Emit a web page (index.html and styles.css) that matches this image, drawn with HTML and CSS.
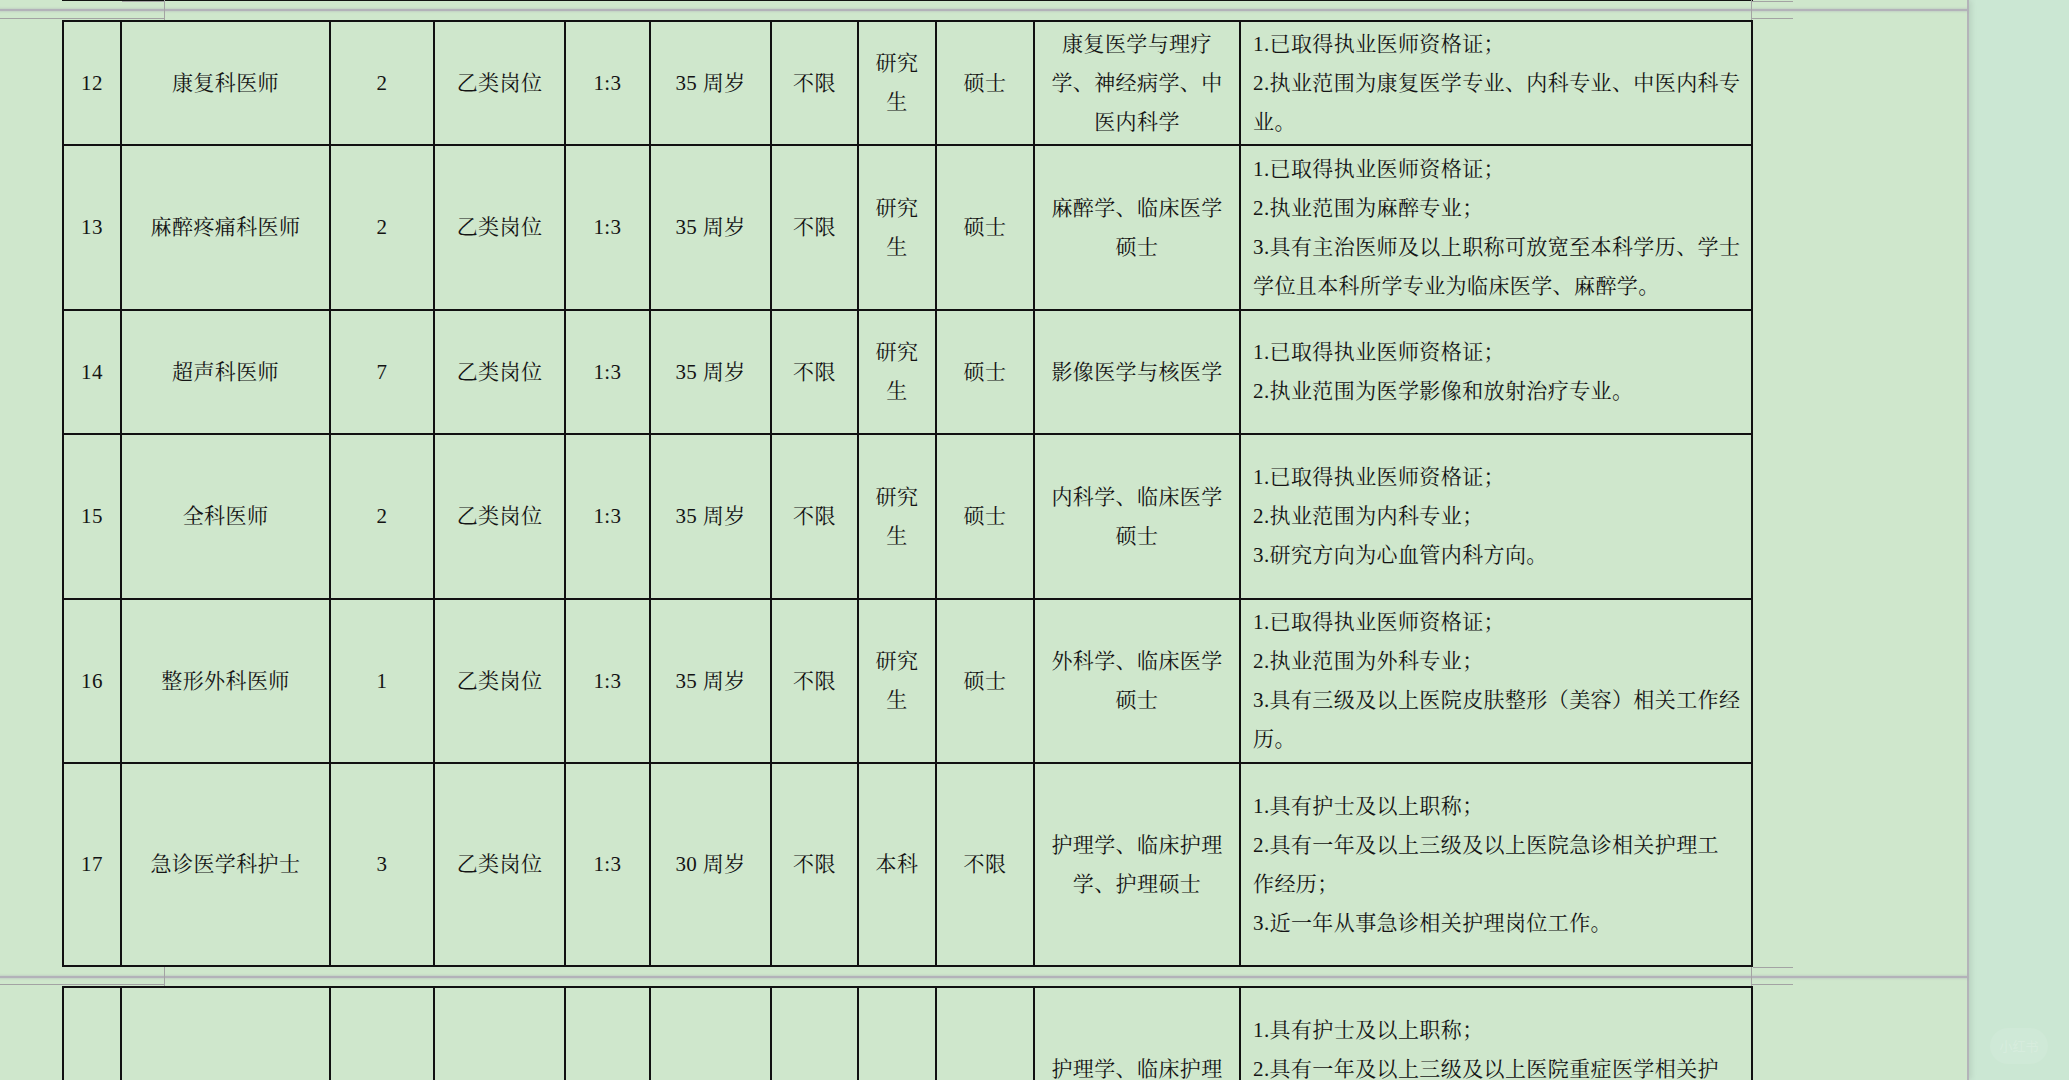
FILE: index.html
```html
<!DOCTYPE html>
<html lang="zh-CN">
<head>
<meta charset="utf-8">
<title>招聘岗位表</title>
<link rel="stylesheet" href="styles.css">
</head>
<body>
<div class="screen">
  <div class="sheet">
    <div class="break break-top">
      <div class="prev-edge"></div>
      <div class="gap"></div>
      <div class="mark mark-lv"></div>
      <div class="mark mark-lh-up"></div>
      <div class="mark mark-lh-down"></div>
      <div class="mark mark-rv"></div>
      <div class="mark mark-rh-up"></div>
      <div class="mark mark-rh-down"></div>
    </div>
    <table class="grid">
      <colgroup>
        <col class="c-no"><col class="c-name"><col class="c-num"><col class="c-type"><col class="c-ratio"><col class="c-age"><col class="c-sex"><col class="c-edu"><col class="c-deg"><col class="c-major"><col class="c-req">
      </colgroup>
      <tbody>
        <tr class="r-124">
          <td class="num">12</td><td>康复科医师</td><td class="num">2</td><td>乙类岗位</td><td class="num">1:3</td><td>35 周岁</td><td>不限</td><td>研究生</td><td>硕士</td>
          <td class="major">康复医学与理疗学、神经病学、中医内科学</td>
          <td class="req"><p>1.已取得执业医师资格证；</p><p>2.执业范围为康复医学专业、内科专业、中医内科专<br>业。</p></td>
        </tr>
        <tr class="r-165">
          <td class="num">13</td><td>麻醉疼痛科医师</td><td class="num">2</td><td>乙类岗位</td><td class="num">1:3</td><td>35 周岁</td><td>不限</td><td>研究生</td><td>硕士</td>
          <td class="major">麻醉学、临床医学硕士</td>
          <td class="req"><p>1.已取得执业医师资格证；</p><p>2.执业范围为麻醉专业；</p><p>3.具有主治医师及以上职称可放宽至本科学历、学士<br>学位且本科所学专业为临床医学、麻醉学。</p></td>
        </tr>
        <tr class="r-124">
          <td class="num">14</td><td>超声科医师</td><td class="num">7</td><td>乙类岗位</td><td class="num">1:3</td><td>35 周岁</td><td>不限</td><td>研究生</td><td>硕士</td>
          <td class="major">影像医学与核医学</td>
          <td class="req"><p>1.已取得执业医师资格证；</p><p>2.执业范围为医学影像和放射治疗专业。</p></td>
        </tr>
        <tr class="r-165">
          <td class="num">15</td><td>全科医师</td><td class="num">2</td><td>乙类岗位</td><td class="num">1:3</td><td>35 周岁</td><td>不限</td><td>研究生</td><td>硕士</td>
          <td class="major">内科学、临床医学硕士</td>
          <td class="req"><p>1.已取得执业医师资格证；</p><p>2.执业范围为内科专业；</p><p>3.研究方向为心血管内科方向。</p></td>
        </tr>
        <tr class="r-164">
          <td class="num">16</td><td>整形外科医师</td><td class="num">1</td><td>乙类岗位</td><td class="num">1:3</td><td>35 周岁</td><td>不限</td><td>研究生</td><td>硕士</td>
          <td class="major">外科学、临床医学硕士</td>
          <td class="req"><p>1.已取得执业医师资格证；</p><p>2.执业范围为外科专业；</p><p>3.具有三级及以上医院皮肤整形（美容）相关工作经<br>历。</p></td>
        </tr>
        <tr class="r-203">
          <td class="num">17</td><td>急诊医学科护士</td><td class="num">3</td><td>乙类岗位</td><td class="num">1:3</td><td>30 周岁</td><td>不限</td><td>本科</td><td>不限</td>
          <td class="major">护理学、临床护理学、护理硕士</td>
          <td class="req"><p>1.具有护士及以上职称；</p><p>2.具有一年及以上三级及以上医院急诊相关护理工<br>作经历；</p><p>3.近一年从事急诊相关护理岗位工作。</p></td>
        </tr>
      </tbody>
    </table>
    <div class="break break-mid">
      <div class="gap"></div>
      <div class="mark mark-lv"></div>
      <div class="mark mark-lh-down"></div>
      <div class="mark mark-rv"></div>
      <div class="mark mark-rh-up"></div>
      <div class="mark mark-rh-down"></div>
    </div>
    <table class="grid">
      <colgroup>
        <col class="c-no"><col class="c-name"><col class="c-num"><col class="c-type"><col class="c-ratio"><col class="c-age"><col class="c-sex"><col class="c-edu"><col class="c-deg"><col class="c-major"><col class="c-req">
      </colgroup>
      <tbody>
        <tr class="r-203">
          <td class="num tail">18</td><td class="tail">重症医学科护士</td><td class="num tail">3</td><td class="tail">乙类岗位</td><td class="num tail">1:3</td><td class="tail">30 周岁</td><td class="tail">不限</td><td class="tail">本科</td><td class="tail">不限</td>
          <td class="major">护理学、临床护理学、护理硕士</td>
          <td class="req"><p>1.具有护士及以上职称；</p><p>2.具有一年及以上三级及以上医院重症医学相关护<br>理工作经历；</p><p>3.近一年从事重症医学相关护理岗位工作。</p></td>
        </tr>
      </tbody>
    </table>
  </div>
  <div class="desk">
    <div class="watermark">小红书</div>
  </div>
</div>
</body>
</html>
```

FILE: styles.css
```css
html, body {
  margin: 0;
  padding: 0;
  overflow: hidden;
  background: #cce7d3;
}

.screen {
  display: flex;
  width: 2069px;
  height: 1080px;
  overflow: hidden;
}

.sheet {
  flex: 0 0 1967px;
  background: #cfe7cc;
  border-right: 2px solid #b4b4b9;
  box-shadow: 2px 0 6px rgba(0, 0, 0, 0.10);
  position: relative;
  z-index: 1;
}

.desk {
  flex: 1;
  background: #cbe7d3;
  display: flex;
  flex-direction: column;
  justify-content: flex-end;
  align-items: center;
  padding-bottom: 16px;
}

.watermark {
  width: 58px;
  height: 36px;
  border-radius: 18px;
  background: rgba(255, 255, 255, 0.09);
  color: rgba(255, 255, 255, 0.18);
  font: 13px/36px "Noto Sans CJK SC", sans-serif;
  text-align: center;
}

/* page breaks (hidden white space) */
.break {
  position: relative;
  height: 20px;
}

.break-mid {
  height: 19px;
}

.prev-edge {
  position: absolute;
  top: -1px;
  left: 62px;
  width: 1691px;
  height: 2px;
  background: #111;
}

.gap {
  position: absolute;
  left: 0;
  right: 0;
  top: 9px;
  height: 2px;
  background: #b3b2b9;
  box-shadow: 0 0 2px 1px rgba(170, 170, 180, 0.35);
}

.mark {
  position: absolute;
  background: #a3a3a3;
}

.mark-lv { left: 164px; top: 0; width: 1px; height: 20px; }
.mark-lh-up { left: 122px; top: 1px; width: 43px; height: 1px; }
.mark-lh-down { left: 0; top: 18px; width: 165px; height: 1px; }
.mark-rv { left: 1751px; top: 0; width: 1px; height: 20px; }
.mark-rh-up { left: 1751px; top: 1px; width: 42px; height: 1px; }
.mark-rh-down { left: 1751px; top: 18px; width: 42px; height: 1px; }

.break-mid .mark-lv,
.break-mid .mark-rv { height: 19px; }
.break-mid .mark-lh-down,
.break-mid .mark-rh-down { top: 17px; }
.break-mid .mark-rh-up { top: 0; left: 1753px; width: 40px; }

/* table */
.grid {
  margin-left: 62px;
  width: 1691px;
  table-layout: fixed;
  border-collapse: separate;
  border-spacing: 0;
  border-left: 2px solid #111;
  border-top: 2px solid #111;
  font-family: "Liberation Serif", "Noto Serif CJK SC", "Noto Sans CJK SC", serif;
  font-size: 21px;
  line-height: 39px;
  letter-spacing: 0.4px;
  color: #141414;
}

.c-no { width: 58px; }
.c-name { width: 209px; }
.c-num { width: 104px; }
.c-type { width: 131px; }
.c-ratio { width: 85px; }
.c-age { width: 121px; }
.c-sex { width: 87px; }
.c-edu { width: 78px; }
.c-deg { width: 98px; }
.c-major { width: 206px; }
.c-req { width: 512px; }

.grid td {
  border-right: 2px solid #111;
  border-bottom: 2px solid #111;
  padding: 0 10px;
  text-align: center;
  vertical-align: middle;
  overflow: hidden;
}

.r-124 { height: 124px; }
.r-164 { height: 164px; }
.r-165 { height: 165px; }
.r-203 { height: 203px; }

.grid td.num {
  padding: 0 4px;
}

.grid td.major {
  padding: 0 12px;
}

.grid td.req {
  padding: 0 2px 0 12px;
  text-align: left;
}

/* the last row continues below the visible area */
.grid td.tail {
  padding-top: 70px;
}

.req p {
  margin: 0;
}
```
